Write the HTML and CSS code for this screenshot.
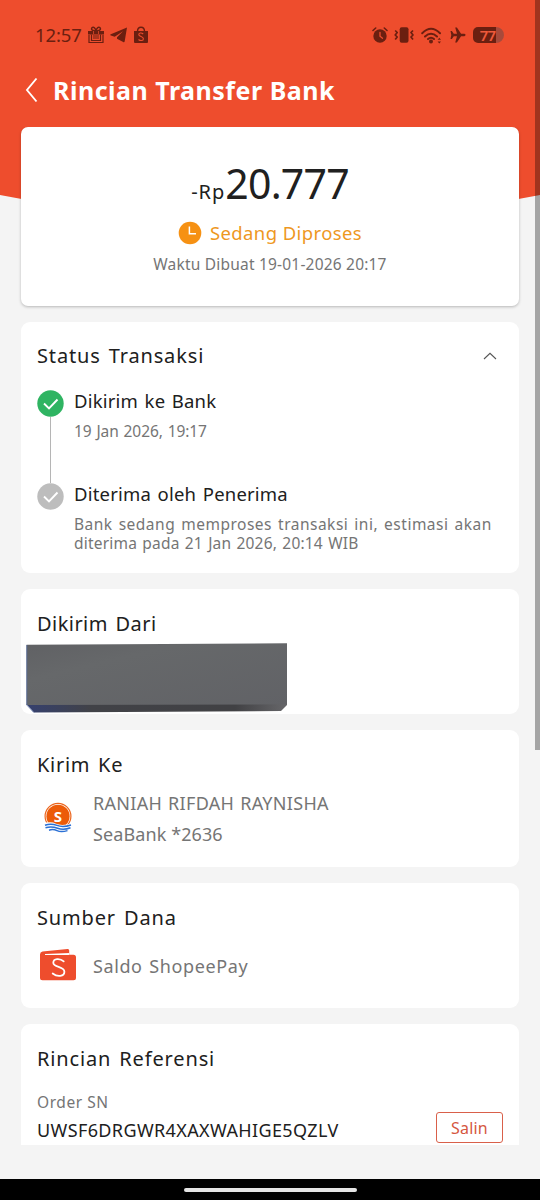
FILE: index.html
```html
<!DOCTYPE html>
<html lang="id">
<head>
<meta charset="utf-8">
<title>Rincian Transfer Bank</title>
<link rel="stylesheet" href="styles.css">
</head>
<body>
<div class="screen">
  <div class="backdrop"></div>
  <div class="statusbar">
    <span class="clock">12:57</span>
    <svg class="gift" width="18" height="18" viewBox="0 0 18 18"><g fill="none" stroke="#6b1f10"><path d="M9 5C6 5 3.500 3.500 5 1.800S8.500 2.500 9 5C9.500 2.500 11.500 0 13 1.800S12 5 9 5" stroke-width="1.500"/><path d="M2 9v7.500h14V9M4.500 8.500v6h9v-6M6 10h6M6 12h6M9 4v4M3 16.500h12" stroke-width="1.200"/></g><path d="M1 5h16v3.500H1z" fill="#6b1f10"/><path d="M6.500 5v3M11.500 5v3" stroke="#ee4d2d" stroke-width=".7"/></svg>
    <svg class="plane-tg" width="18" height="16" viewBox="0 0 18 16"><path d="M17 .5L.8 7.200c-.8.400-.7 1 .1 1.300l3.800 1.200L13 4.200 7 10.300v1.400l6.200 3.300c.8.500 1.300.2 1.500-.7z" fill="#6b1f10"/></svg>
    <svg class="bag" width="16" height="18" viewBox="0 0 16 18"><path d="M1 5h14v11q0 1-1 1H2q-1 0-1-1z" fill="#6b1f10"/><path d="M4.500 5.500C4.500-.2 11.500-.2 11.500 5.500" fill="none" stroke="#6b1f10" stroke-width="1.400"/><path d="M10.200 8C8.500 6.500 5.700 6.800 5.800 8.600c.1 2.200 4.600 1.500 4.600 4.100 0 2.200-3 2.400-4.900.8" fill="none" stroke="#ee4d2d" stroke-width="1.100"/></svg>
    <span class="grow"></span>
    <svg class="alarm" width="16" height="16" viewBox="0 0 16 16"><circle cx="8" cy="9" r="6.700" fill="#6b1f10"/><path d="M1 3.500L3.700 1M15 3.500L12.300 1" stroke="#6b1f10" stroke-width="1.600" stroke-linecap="round"/><path d="M8 5.500V9.300l2.500 1.900" fill="none" stroke="#ee4d2d" stroke-width="1.300" stroke-linecap="round"/></svg>
    <svg class="vibrate" width="20" height="16" viewBox="0 0 20 16"><rect x="5.700" y=".3" width="8.800" height="15.400" rx="2" fill="#6b1f10"/><path d="M1.200 3.500l2 2-2 2.500 2 2-2 2.500M19 3.500l-2 2 2 2.500-2 2 2 2.500" fill="none" stroke="#6b1f10" stroke-width="1.700" stroke-linejoin="round"/></svg>
    <svg class="wifi" width="21" height="17" viewBox="0 0 21 17"><g fill="none" stroke="#6b1f10" stroke-width="2" stroke-linecap="round"><path d="M1.200 6.200Q10 -2.600 19 6.200M4 9.500q6-5.600 12 0"/><path d="M7 12q3-2.500 6 0" /></g><circle cx="10" cy="14.500" r="2" fill="#6b1f10"/><path d="M16.600 12.800L18.300 10.800l1.700 2zM16.600 14.600l1.700 2 1.700-2z" fill="#6b1f10"/></svg>
    <svg class="flight" width="16" height="16" viewBox="0 0 16 16"><path d="M.5 4h1.400l1.900 2.800H7L5.200.5h1.700l4.200 6.300h3.300q2.400 1.200 0 2.400h-3.300l-4.200 6.300H5.200L7 9.200H3.800L1.900 12H.5l.8-4z" fill="#6b1f10"/></svg>
    <div class="battery"><span>77</span></div>
  </div>
  <div class="titlebar">
    <svg width="14" height="26" viewBox="0 0 14 26"><path d="M11.500 1.500L2 13l9.500 11.500" fill="none" stroke="#fff" stroke-width="1.900"/></svg>
    <h1>Rincian Transfer Bank</h1>
  </div>
  <main class="content">
    <section class="card summary">
      <div class="amount"><span class="currency">-Rp</span><span class="value">20.777</span></div>
      <div class="state">
        <svg width="24" height="24" viewBox="0 0 24 24"><circle cx="12" cy="12" r="11.300" fill="#f69113"/><path d="M11.400 5.500v7.200H18" fill="none" stroke="#fff" stroke-width="1.500"/></svg>
        <span>Sedang Diproses</span>
      </div>
      <div class="created">Waktu Dibuat 19-01-2026 20:17</div>
    </section>

    <section class="card progress">
      <div class="heading"><h2 class="h-status">Status Transaksi</h2>
        <svg width="14" height="8" viewBox="0 0 14 8"><path d="M1 7l6-5.700L13 7" fill="none" stroke="#555" stroke-width="1.100"/></svg>
      </div>
      <div class="step">
        <div class="rail">
          <svg width="27" height="27" viewBox="0 0 27 27"><circle cx="13.500" cy="13.500" r="13.200" fill="#2fb462"/><path d="M7 13.500l5 5 8.500-9" fill="none" stroke="#fff" stroke-width="1.900"/></svg>
          <i class="line"></i>
        </div>
        <div class="info"><h3 class="s-sent">Dikirim ke Bank</h3><p class="s-date">19 Jan 2026, 19:17</p></div>
      </div>
      <div class="step">
        <div class="rail">
          <svg width="27" height="27" viewBox="0 0 27 27"><circle cx="13.500" cy="13.500" r="13.200" fill="#bdbdbd"/><path d="M7 13.500l5 5 8.500-9" fill="none" stroke="#fff" stroke-width="1.900"/></svg>
        </div>
        <div class="info"><h3 class="s-received">Diterima oleh Penerima</h3><p class="s-note"><span class="n-first">Bank sedang memproses transaksi ini, estimasi akan</span><br><span class="n-second">diterima pada 21 Jan 2026, 20:14 WIB</span></p></div>
      </div>
    </section>

    <section class="card sender">
      <h2 class="h-from">Dikirim Dari</h2>
      <svg class="redacted" width="262" height="71" viewBox="0 0 262 71">
        <defs>
          <linearGradient id="face" x1="0" y1="0" x2="1" y2="1"><stop offset="0" stop-color="#606164"/><stop offset=".3" stop-color="#66686a"/><stop offset="1" stop-color="#616266"/></linearGradient>
          <linearGradient id="edge"><stop offset="0" stop-color="#35406f"/><stop offset=".25" stop-color="#414247"/><stop offset=".8" stop-color="#414144"/><stop offset="1" stop-color="#67676a"/></linearGradient>
        </defs>
        <path d="M.5 61H261v1l-6 6-247 1.500z" fill="url(#edge)"/>
        <path d="M.5 1.800L261 .2V61.300L.5 62z" fill="url(#face)"/>
        <path d="M.8 2v60l7 7.500" fill="none" stroke="#53699f" stroke-width=".8"/>
      </svg>
    </section>

    <section class="card recipient">
      <h2 class="h-to">Kirim Ke</h2>
      <div class="account">
        <svg width="42" height="42" viewBox="0 0 42 42"><circle cx="21" cy="19.300" r="12.900" fill="none" stroke="#ec651d" stroke-width="1.200"/><circle cx="21" cy="19.300" r="11.600" fill="#ec5b09"/><path d="M6 26.500q8-2.500 13 .3 7 2.500 16-.8v9H6z" fill="#fff"/><path d="M8 28.200q6-2.200 12 .2t14-.4M8.500 30.800q6-1.800 12 .5t13-.5M12 33.200q4-1.400 8 .4t10.500 0" fill="none" stroke="#2b70d5" stroke-width="1.500"/><text x="21" y="24.500" class="coin">S</text></svg>
        <div class="who"><p class="a-name">RANIAH RIFDAH RAYNISHA</p><p class="a-bank">SeaBank *2636</p></div>
      </div>
    </section>

    <section class="card source">
      <h2 class="h-source">Sumber Dana</h2>
      <div class="account">
        <svg width="42" height="42" viewBox="0 0 42 42"><path d="M3 9.500Q3 7 5.500 6.500L30.500 4q1.700-.2 1.700 1.500v4.300h4.300q2.500 0 2.500 2.500v20.500q0 2.500-2.500 2.500h-31Q3 35.300 3 32.800z" fill="#ee4d2d"/><path d="M8 9.900h24.200V8.100L8 9z" fill="#fff"/><path d="M26.700 16.400C23 13 16.400 13.300 16.300 17.700c0 5 11.100 3.400 11.100 9 0 4.900-7.100 5.500-11.700 1.800" fill="none" stroke="#fff" stroke-width="1.800" stroke-linecap="round"/></svg>
        <p class="a-saldo">Saldo ShopeePay</p>
      </div>
    </section>

    <section class="card reference">
      <h2 class="h-ref">Rincian Referensi</h2>
      <div class="order">
        <div><p class="o-label">Order SN</p><p class="o-number">UWSF6DRGWR4XAXWAHIGE5QZLV</p></div>
        <button class="copy">Salin</button>
      </div>
    </section>
  </main>
  <div class="navbar"><i></i></div>
  <div class="scrollbar"></div>
</div>
</body>
</html>
```
FILE: styles.css
```css
* { box-sizing: border-box; margin: 0; padding: 0; }
body { font-family: "Noto Sans", sans-serif; background: #f4f4f4; color: #202020; font-weight: 400; }
svg { display: block; flex: none; }
h1, h2, h3, p { white-space: nowrap; }
h2, h3 { font-weight: 400; }

.screen { position: relative; width: 540px; height: 1200px; overflow: hidden; display: flex; flex-direction: column; }
.backdrop { position: absolute; inset: 0 0 auto 0; height: 235px; background: #ee4d2d; clip-path: polygon(0 0, 100% 0, 100% 195px, 96% 199px, 75% 220px, 25% 220px, 4% 199px, 0 195px); }

.statusbar { position: relative; height: 70px; padding: 0 36px 0 35px; display: flex; align-items: center; }
.clock { width: 52px; font-size: 18.500px; letter-spacing: -.1px; color: #6b1f10; line-height: 24px; }
.plane-tg { margin-left: 5px; }
.bag { margin-left: 5px; }
.grow { flex: 1; }
.vibrate { margin-left: 6px; }
.wifi { margin-left: 7px; }
.flight { margin-left: 8px; }
.battery { margin-left: 7px; width: 31px; height: 16px; border-radius: 5px 8px 8px 5px; background: linear-gradient(90deg, #6b1f10 23px, #a84a3b 23px); color: #ee5a3c; text-align: center; }
.battery span { display: block; font-size: 15px; line-height: 16px; font-weight: 600; letter-spacing: -.8px; padding-right: 2px; }

.titlebar { position: relative; height: 57px; padding-left: 25px; display: flex; align-items: flex-start; gap: 14px; padding-top: 7px; color: #fff; }
.titlebar h1 { font-size: 25px; line-height: 26px; font-weight: 700; letter-spacing: .5px; }

.content { position: relative; height: 1018px; overflow: hidden; padding: 0 21px; display: flex; flex-direction: column; gap: 16px; }
.card { flex: none; background: #fff; border-radius: 9px; padding: 0 16px; }
.card h2 { font-size: 20px; line-height: 28px; }

.summary { height: 179px; border-radius: 7px; box-shadow: 0 1px 3px rgba(0, 0, 0, .25); padding-top: 31px; display: flex; flex-direction: column; align-items: center; }
.amount { line-height: 50px; height: 50px; white-space: nowrap; }
.currency { font-size: 20px; letter-spacing: 1px; }
.value { font-size: 41px; letter-spacing: -.8px; }
.state { display: flex; align-items: center; gap: 8px; height: 24px; margin-top: 13px; color: #ee981f; font-size: 18.500px; letter-spacing: .4px; }
.state span { margin-top: -1px; }
.created { margin-top: 8px; font-size: 15.500px; line-height: 22px; letter-spacing: .2px; color: #757575; }

.progress { height: 251px; padding-top: 20px; }
.heading { display: flex; justify-content: space-between; align-items: center; padding-right: 6px; }
.step { display: flex; gap: 10px; height: 93px; }
.heading + .step { margin-top: 20px; }
.rail { width: 27px; display: flex; flex-direction: column; align-items: center; }
.line { width: 1px; flex: 1; background: #b5b5b5; }
.info { margin-top: -2px; }
.info h3 { font-size: 18.500px; line-height: 26px; }
.info p { margin-top: 8px; font-size: 15.500px; line-height: 18.500px; color: #757575; }

.sender { height: 125px; padding-top: 21px; }
.redacted { margin: 5px 0 0 -11px; }

.recipient { height: 137px; padding-top: 21px; }
.account { display: flex; align-items: center; gap: 14px; color: #757575; font-size: 18px; line-height: 24px; }
.recipient .account { margin-top: 8px; height: 62px; }
.who { display: flex; flex-direction: column; gap: 7px; }
.coin { font: 700 15px "Noto Sans", sans-serif; fill: #fff; text-anchor: middle; }

.source { height: 125px; padding-top: 21px; }
.source .account { margin-top: 13px; }

.reference { height: 160px; padding-top: 21px; }
.order { display: flex; justify-content: space-between; margin-top: 18px; }
.o-label { font-size: 15.500px; line-height: 22px; color: #757575; letter-spacing: .55px; }
.o-number { font-size: 18px; line-height: 24px; margin-top: 5px; letter-spacing: .38px; }
.copy { width: 67px; height: 31px; margin-top: 21px; border: 1.500px solid #d9604a; border-radius: 3px; background: #fff; color: #d5573f; font: 400 16px "Noto Sans", sans-serif; letter-spacing: .2px; }

.card h2 { word-spacing: 2px; }
.h-status { letter-spacing: .85px; }
.h-from { letter-spacing: .45px; }
.h-to { letter-spacing: .7px; }
.h-source { letter-spacing: .85px; }
.h-ref { letter-spacing: .85px; }
.s-sent, .s-received { letter-spacing: .2px; word-spacing: 1.500px; }
.s-date { letter-spacing: -.1px; word-spacing: 1px; }
.n-first { letter-spacing: .5px; word-spacing: 1.500px; }
.n-second { letter-spacing: .2px; word-spacing: 1px; }
.a-name { letter-spacing: .3px; word-spacing: 1px; }
.a-bank { letter-spacing: .1px; }
.a-saldo { letter-spacing: .6px; word-spacing: 1.500px; }

.navbar { margin-top: auto; height: 21px; background: #000; display: flex; justify-content: center; padding-top: 9px; }
.navbar i { width: 173px; height: 4px; border-radius: 2px; background: #e5e5e5; }
.scrollbar { position: absolute; right: 0; top: 0; width: 5px; height: 750px; background: rgba(0, 0, 0, .32); }
```
